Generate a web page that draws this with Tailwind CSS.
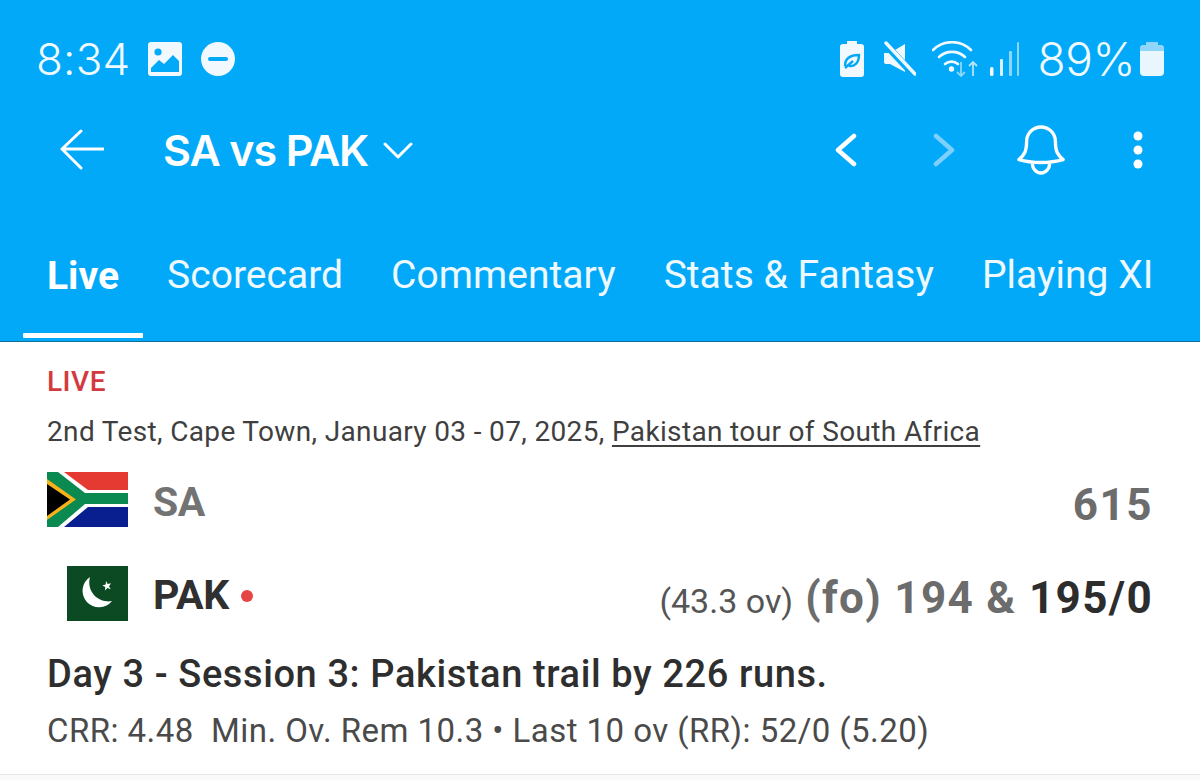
<!DOCTYPE html>
<html><head><meta charset="utf-8"><script src="https://cdn.jsdelivr.net/npm/@tailwindcss/browser@4"></script></head>
<body class="bg-white">
<div class="w-[1200px] h-[780px] overflow-hidden flex flex-col bg-white font-['Roboto',sans-serif]">
<header class="h-[342px] shrink-0 bg-[#03a9f9] border-b border-[#0b6f9f] text-white flex flex-col">
  <div class="h-[118px] pl-[36px] pr-[36px] flex items-center justify-between shrink-0">
    <div class="flex items-center">
      <span class="text-[44px] leading-none font-['Inter',sans-serif] font-light text-white/95 w-[112px] tracking-[0.2px]">8:34</span>
      <svg class="w-[34px] h-[34px]" viewBox="0 0 34 34"><rect width="34" height="34" rx="3" fill="#f2f9fe"/><circle cx="10" cy="10" r="3.6" fill="#03a9f9"/><path d="M3 30 L3 26 L11 18 L16 22 L25 13 L31 19 L31 30 Z" fill="#03a9f9"/></svg>
      <svg class="w-[34px] h-[34px] ml-[19px]" viewBox="0 0 34 34"><circle cx="17" cy="17" r="17" fill="#f2f9fe"/><rect x="7" y="15" width="20" height="4" rx="2" fill="#03a9f9"/></svg>
    </div>
    <div class="flex items-center">
      <svg class="w-[24px] h-[36px]" viewBox="0 0 24 36"><path d="M7 0h10v3h4a3 3 0 0 1 3 3v27a3 3 0 0 1-3 3H3a3 3 0 0 1-3-3V6a3 3 0 0 1 3-3h4z" fill="#f2f9fe"/><path d="M5 25c0-7 5-11 14-11 0 8-5 12-10 11M5 27l8-7" fill="none" stroke="#03a9f9" stroke-width="2.400"/></svg>
      <svg class="w-[33px] h-[36px] ml-[19px]" viewBox="0 0 33 36"><path d="M1 12h6L22 3v28L7 23H3a2 2 0 0 1-2-2z" fill="#f2f9fe"/><path d="M2 3 L32 35" stroke="#03a9f9" stroke-width="7"/><path d="M3 2 L32 33" stroke="#f2f9fe" stroke-width="3.400" stroke-linecap="round"/></svg>
      <svg class="w-[46px] h-[36px] ml-[16px]" viewBox="0 0 46 36"><g fill="none" stroke="#f2f9fe" stroke-width="2.600" stroke-linecap="round"><path d="M1 9a27 27 0 0 1 38 0"/><path d="M7 16a19 19 0 0 1 26 0"/><path d="M13 23a10 10 0 0 1 13 0"/></g><circle cx="19.500" cy="28" r="2.700" fill="#f2f9fe"/><g fill="none" stroke="#8fd6fb" stroke-width="1.800"><path d="M29 21v14M25 31l4 4 4-4"/><path d="M41 35V21M37 25l4-4 4 4" stroke="#b5e4fc"/></g></svg>
      <svg class="w-[29px] h-[34px] ml-[12px]" viewBox="0 0 29 34"><rect x="0" y="25" width="3.500" height="9" rx="1.500" fill="#f2f9fe"/><rect x="10" y="17" width="3" height="17" rx="1" fill="#d6f0fd"/><rect x="19" y="9" width="3" height="25" rx="1" fill="#8fd6fb"/><rect x="27" y="0" width="2" height="34" rx="1" fill="#8fd6fb"/></svg>
      <span class="text-[46px] leading-none font-['Inter',sans-serif] font-light text-white/95 ml-[19px] tracking-[-0.5px]">89%</span>
      <svg class="w-[24px] h-[34px] ml-[5px]" viewBox="0 0 24 34"><path d="M6 0h12v3H6z" fill="#8fd6fb"/><rect y="3" width="24" height="31" rx="4" fill="#e9f6fe"/><path d="M0 9V7a4 4 0 0 1 4-4h16a4 4 0 0 1 4 4v2z" fill="#8fd6fb"/></svg>
    </div>
  </div>
  <div class="h-[64px] pl-[60px] pr-[56px] flex items-center justify-between shrink-0">
    <div class="flex items-center">
      <svg class="w-[44px] h-[42px]" viewBox="0 0 44 42" fill="none" stroke="#fff" stroke-width="3" stroke-linecap="round" stroke-linejoin="round"><path d="M2 20h41M21 2 2 20l19 19"/></svg>
      <span class="ml-[59px] text-[43px] leading-none font-['Inter',sans-serif] font-semibold tracking-[-1.1px]">SA vs PAK</span>
      <svg class="w-[30px] h-[18px] ml-[15px] mt-[2px]" viewBox="0 0 30 18" fill="none" stroke="#fff" stroke-width="3" stroke-linecap="round" stroke-linejoin="round"><path d="M2 2l13 13L28 2"/></svg>
    </div>
    <div class="flex items-center">
      <svg class="w-[22px] h-[34px]" viewBox="0 0 22 34" fill="none" stroke="#fff" stroke-width="4.500" stroke-linecap="round" stroke-linejoin="round"><path d="M19 3 3 17l16 14"/></svg>
      <svg class="w-[22px] h-[34px] ml-[76px]" viewBox="0 0 22 34" fill="none" stroke="#7cd0fb" stroke-width="4.500" stroke-linecap="round" stroke-linejoin="round"><path d="M3 3l16 14L3 31"/></svg>
      <svg class="w-[48px] h-[54px] ml-[62px]" viewBox="0 0 50 54" fill="none" stroke="#fff" stroke-width="3.500" stroke-linejoin="round"><path d="M2 37c6-5 8-9 8-19a15 15 0 0 1 30 0c0 10 2 14 8 19-14 4-32 4-46 0z"/><path d="M16 41a9 10 0 0 0 18 0"/></svg>
      <svg class="w-[12px] h-[38px] ml-[67px]" viewBox="0 0 12 38" fill="#fff"><circle cx="6" cy="5" r="4.500"/><circle cx="6" cy="19" r="4.500"/><circle cx="6" cy="33" r="4.500"/></svg>
    </div>
  </div>
  <nav class="flex-1 flex items-end pl-[23px] text-[39px] leading-none">
    <div class="w-[120px] h-[124px] flex flex-col items-center justify-end">
      <span class="font-bold text-white mb-[37px] text-[39px]">Live</span>
      <span class="w-full h-[5px] bg-white rounded-[1px] mb-[3px]"></span>
    </div>
    <div class="h-[124px] flex items-end gap-[48px] pb-[46px] ml-[24px] text-[#eef9ff] tracking-[0.03px]">
      <span>Scorecard</span><span>Commentary</span><span>Stats &amp; Fantasy</span><span>Playing XI</span>
    </div>
  </nav>
</header>
<main class="flex-1 pl-[47px] pr-[47px] flex flex-col relative">
  <div class="text-[28px] leading-none font-medium text-[#d33a3f] mt-[26px] tracking-[0.5px]">LIVE</div>
  <div class="text-[28px] leading-none text-[#3f3f3f] mt-[22px] tracking-[0.35px]">2nd Test, Cape Town, January 03 - 07, 2025, <span class="underline underline-offset-[4px] decoration-2">Pakistan tour of South Africa</span></div>
  <div class="flex items-center justify-between mt-[26px] h-[55px]">
    <div class="flex items-center">
      <svg class="w-[81px] h-[55px]" viewBox="0 0 81 55"><rect width="81" height="55" fill="#fff"/><path d="M17 0h64v18H41z" fill="#e53a32"/><path d="M17 55h64V35H41z" fill="#0a1f8f"/><path d="M0 0h11l27 21h43v11H38L11 55H0z" fill="#0a8a50"/><path d="M0 7l29 20.500L0 48z" fill="#f5b21a"/><path d="M0 12l23 15.500L0 44z" fill="#000"/></svg>
      <span class="ml-[25px] text-[41px] leading-none font-bold text-[#737373] tracking-[-0.5px] mt-[6px]">SA</span>
    </div>
    <span class="text-[44px] leading-none font-bold text-[#6c6c6c] mt-[10px] tracking-[1.5px]">615</span>
  </div>
  <div class="flex items-center justify-between mt-[39px] h-[55px]">
    <div class="flex items-center pl-[20px]">
      <svg class="w-[61px] h-[55px]" viewBox="0 0 61 55"><rect width="61" height="55" fill="#0b4a23"/><path d="M23 11a16.500 16.500 0 1 0 22 24A19 19 0 0 1 23 11z" fill="#fff"/><path d="M39 15l1.700 3 3.300-.8-2 3 1.700 3-3.300-1.200-2.500 2.500.4-3.400-3-1.700 3.400-.8z" fill="#fff"/></svg>
      <span class="ml-[25px] text-[41px] leading-none font-bold text-[#303030] tracking-[-0.2px] mt-[4px]">PAK</span>
      <span class="w-[12px] h-[12px] rounded-full bg-[#e64545] ml-[12px] mt-[4px]"></span>
    </div>
    <div class="flex items-baseline mt-[8px]">
      <span class="text-[34px] leading-none text-[#555] mr-[12px]">(43.3 ov)</span>
      <span class="text-[44px] leading-none font-bold text-[#6c6c6c] tracking-[1.35px]">(fo) 194 &amp; <span class="text-[#2d2d2d]">195/0</span></span>
    </div>
  </div>
  <div class="text-[38px] leading-none font-medium text-[#2e2e2e] mt-[34px] tracking-[0.6px] whitespace-nowrap">Day 3 - Session 3: Pakistan trail by 226 runs.</div>
  <div class="text-[33px] leading-none text-[#4a4a4a] mt-[21px] tracking-[0.45px] whitespace-pre">CRR: 4.48  Min. Ov. Rem 10.3 • Last 10 ov (RR): 52/0 (5.20)</div>
  <div class="absolute left-0 right-0 bottom-0 h-[6px] border-t border-[#e6e8ec] bg-[#fafafa]"></div>
</main>
</div>
</body></html>
